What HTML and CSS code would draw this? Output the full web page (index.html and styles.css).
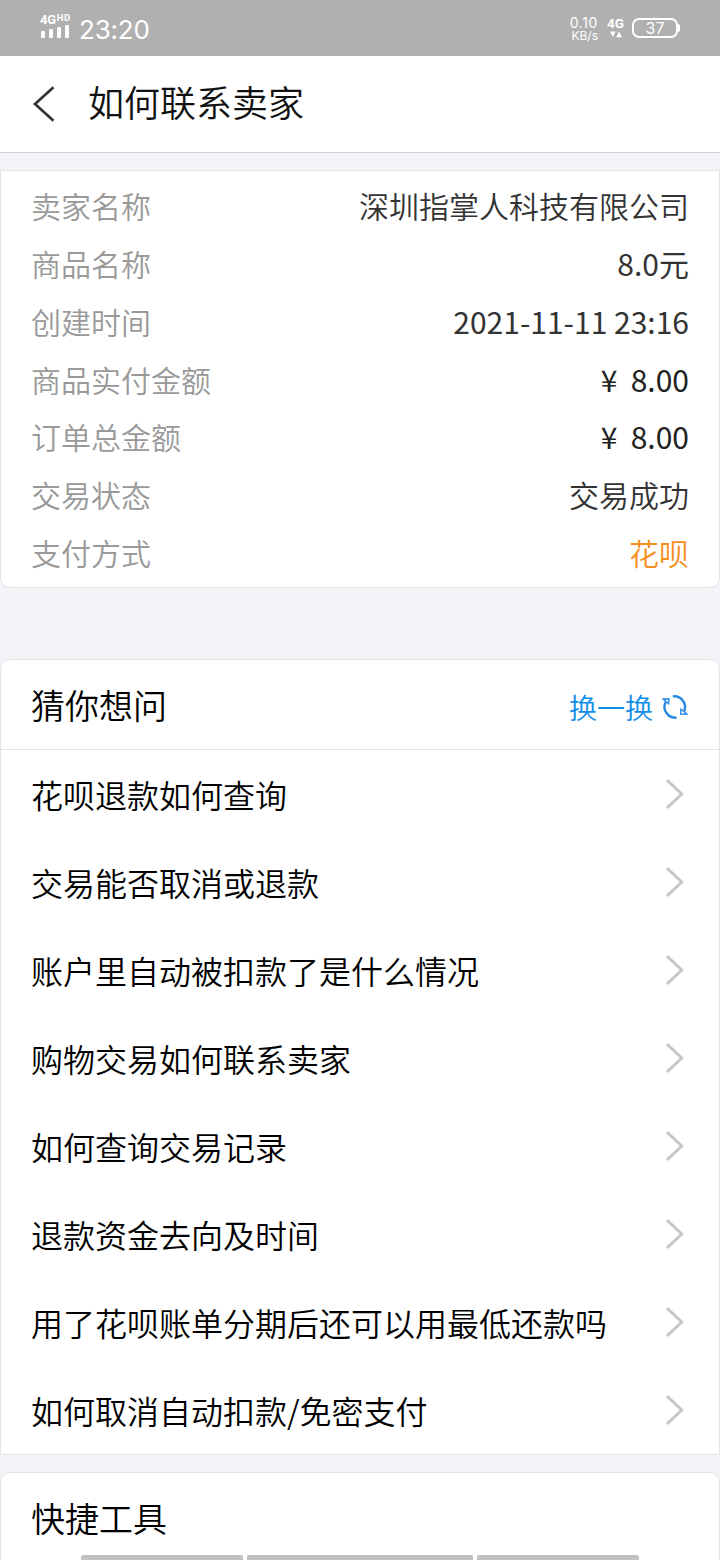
FILE: index.html
```html
<!DOCTYPE html>
<html lang="zh-CN">
<head>
<meta charset="utf-8">
<title>如何联系卖家</title>
<link rel="stylesheet" href="styles.css">
</head>
<body>
<svg width="0" height="0" class="defs"><symbol id="chevron" viewBox="0 0 20 32"><path d="M2 2.2 L16.7 16 L2 29.8" fill="none" stroke="#c7c7cc" stroke-width="3"/></symbol></svg>
<div class="screen">
  <div class="status">
    <div class="network">
      <div class="net-label">4G<span class="hd">HD</span></div>
      <svg width="30" height="14" viewBox="0 0 30 14" fill="#fff"><rect x="1" y="6" width="4" height="7" rx="1.3"/><rect x="9" y="4" width="4" height="9" rx="1.3"/><rect x="17" y="2" width="4" height="11" rx="1.3"/><rect x="25" y="0" width="4" height="13" rx="1.3"/></svg>
    </div>
    <div class="clock">23:20</div>
    <div class="speed"><span class="rate">0.10</span><span class="unit">KB/s</span></div>
    <div class="mobile"><span>4G</span><svg width="12" height="7" viewBox="0 0 12 7" fill="#fff"><path d="M0 0.5H5.6L2.8 6ZM6.2 6.2L9 0.5L11.9 6.2Z"/></svg></div>
    <div class="battery"><span class="level">37</span><i class="tip"></i></div>
  </div>
  <header class="nav">
    <svg class="back" width="24" height="36" viewBox="0 0 24 36"><path d="M21.5 1.2 L3 18 L21.5 34.8" fill="none" stroke="#333" stroke-width="2.7"/></svg>
    <h1 class="title">如何联系卖家</h1>
  </header>
  <section class="card details">
    <div class="row"><span class="label">卖家名称</span><span class="value">深圳指掌人科技有限公司</span></div>
    <div class="row"><span class="label">商品名称</span><span class="value number">8.0元</span></div>
    <div class="row"><span class="label">创建时间</span><span class="value number">2021-11-11 23:16</span></div>
    <div class="row"><span class="label">商品实付金额</span><span class="value number dark"><span class="yen">¥</span> 8.00</span></div>
    <div class="row"><span class="label">订单总金额</span><span class="value number dark"><span class="yen">¥</span> 8.00</span></div>
    <div class="row"><span class="label">交易状态</span><span class="value">交易成功</span></div>
    <div class="row"><span class="label">支付方式</span><span class="value orange">花呗</span></div>
  </section>
  <section class="card questions">
    <div class="head"><h2 class="heading">猜你想问</h2>
      <a class="swap">换一换<svg class="refresh" width="26" height="26" viewBox="0 0 26 26" fill="none" stroke="#2a8be6" stroke-width="2.5"><path d="M10.8 2.4A10.8 10.8 0 0 1 22.3 17"/><path d="M14.6 23.6A10.8 10.8 0 0 1 3.7 8"/><path d="M1.2 5L6.9 4.7L6.6 9.7Z" stroke-width="1.4"/><path d="M18.9 15.2L18.8 20.3L24.8 20Z" stroke-width="1.4"/></svg></a>
    </div>
    <div class="item"><span>花呗退款如何查询</span><svg class="chevron"><use href="#chevron"/></svg></div>
    <div class="item"><span>交易能否取消或退款</span><svg class="chevron"><use href="#chevron"/></svg></div>
    <div class="item"><span>账户里自动被扣款了是什么情况</span><svg class="chevron"><use href="#chevron"/></svg></div>
    <div class="item"><span>购物交易如何联系卖家</span><svg class="chevron"><use href="#chevron"/></svg></div>
    <div class="item"><span>如何查询交易记录</span><svg class="chevron"><use href="#chevron"/></svg></div>
    <div class="item"><span>退款资金去向及时间</span><svg class="chevron"><use href="#chevron"/></svg></div>
    <div class="item"><span>用了花呗账单分期后还可以用最低还款吗</span><svg class="chevron"><use href="#chevron"/></svg></div>
    <div class="item"><span>如何取消自动扣款/免密支付</span><svg class="chevron"><use href="#chevron"/></svg></div>
  </section>
  <section class="card tools"><h2 class="heading">快捷工具</h2></section>
  <div class="gestures"><i></i><i></i><i></i></div>
</div>
</body>
</html>
```
FILE: styles.css
```css
* { box-sizing: border-box; }
body { margin: 0; background: #f3f3f8; font-family: "Noto Sans CJK SC", sans-serif; font-weight: 350; color: #000; }
.defs { position: absolute; }
.screen { position: relative; width: 720px; height: 1560px; overflow: hidden; display: flex; flex-direction: column; }
.status { height: 56px; flex: none; background: #b0b0b0; color: #fff; display: flex; align-items: flex-start; padding-left: 40px; font-family: Roboto, sans-serif; font-weight: 400; }
.network { width: 39px; padding-top: 14px; display: flex; flex-direction: column; }
.network svg { display: block; }
.net-label { font-size: 13px; font-weight: 700; line-height: 11px; height: 11px; letter-spacing: -.3px; display: flex; white-space: nowrap; }
.hd { font-size: 9.5px; line-height: 8px; margin-left: 1px; letter-spacing: .5px; }
.clock { width: 489px; font: 26px/30px Inter, sans-serif; letter-spacing: -.2px; padding-top: 15px; }
.speed { width: 30px; padding-top: 16px; display: flex; flex-direction: column; align-items: flex-end; font-family: Inter, sans-serif; }
.rate { font-size: 14px; line-height: 13px; letter-spacing: .6px; }
.unit { font-size: 12px; line-height: 13px; }
.mobile { width: 17px; margin-left: 9px; padding-top: 16px; display: flex; flex-direction: column; align-items: center; font-size: 13.5px; font-weight: 700; line-height: 14px; }
.mobile svg { display: block; margin-top: 1px; }
.battery { margin: 18px 0 0 8px; display: flex; align-items: center; }
.level { width: 46px; height: 20px; border: 2px solid #fff; border-radius: 7px; text-align: center; font: 16px/17px Inter, sans-serif; }
.tip { width: 2px; height: 8px; background: #fff; border-radius: 0 2px 2px 0; }
.nav { height: 97px; flex: none; background: #fff; border-bottom: 1px solid #d3d3d6; display: flex; align-items: center; padding-left: 32px; }
.back { flex: none; margin: 0 32px 1px 0; }
.title { margin: 0; font-size: 36px; line-height: 54px; font-weight: 350; color: #111; padding-bottom: 6px; }
.card { flex: none; background: #fff; border: 1px solid #e4e4e8; border-radius: 10px; }
.details { height: 418px; margin-top: 17px; padding: 5.5px 30px 0; border-radius: 0 0 10px 10px; }
.row { height: 57.75px; display: flex; justify-content: space-between; align-items: center; font-size: 30px; line-height: 44px; }
.label { color: #999; }
.value { color: #333; white-space: pre; }
.number { font-weight: 400; }
.dark { color: #222; }
.yen { display: inline-block; width: 30px; text-align: center; }
.orange { color: #f68e1e; }
.questions { height: 796px; margin-top: 71px; border-radius: 10px 10px 0 0; }
.head { height: 90px; border-bottom: 1px solid #e2e2e5; display: flex; align-items: center; justify-content: space-between; padding: 1px 30px 0; }
.heading { margin: 0; font-size: 34px; line-height: 50px; font-weight: 350; }
.swap { display: flex; align-items: center; color: #108ee9; font-size: 28px; line-height: 40px; padding-top: 3px; }
.refresh { margin: 0 1px 0 9px; }
.item { height: 88px; display: flex; align-items: center; justify-content: space-between; padding: 0 34px 0 30px; font-size: 32px; line-height: 48px; }
.item span { padding-bottom: 1px; }
.chevron { width: 20px; height: 32px; flex: none; }
.tools { height: 100px; margin-top: 17px; padding: 20px 30px 0; }
.gestures { position: absolute; left: 81px; right: 81px; bottom: 0; height: 5px; display: grid; grid-template-columns: 162px 226px 162px; gap: 4px; }
.gestures i { background: #c1c1c1; border-radius: 2px 2px 0 0; }
```
